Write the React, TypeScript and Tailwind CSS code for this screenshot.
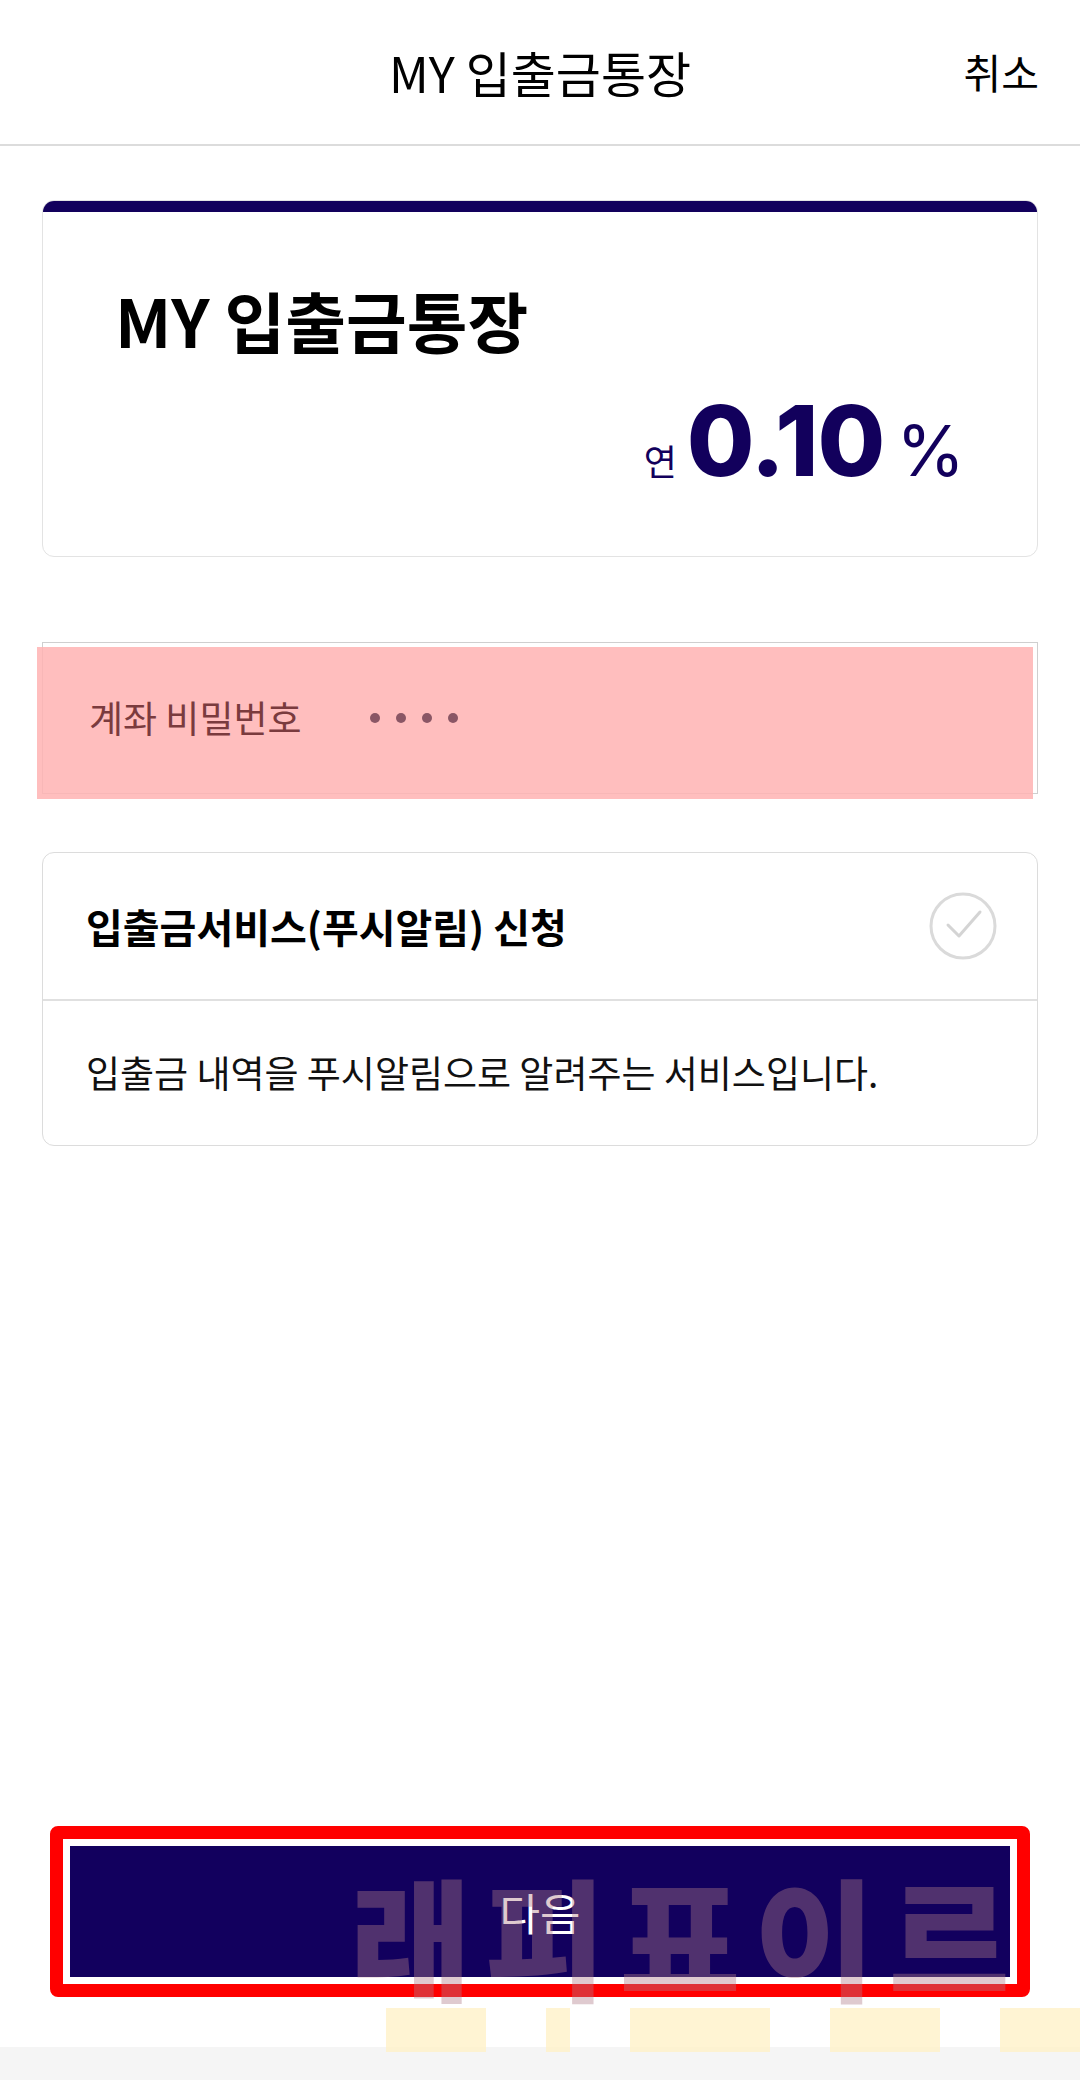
function CheckCircle() {
  return (
    <svg width="68" height="68" viewBox="0 0 68 68" fill="none">
      <circle cx="34" cy="34" r="32" stroke="#dadada" strokeWidth="3" />
      <path
        d="M19 33 L30 44 L51 20"
        stroke="#d4d4d4"
        strokeWidth="3"
        strokeLinecap="round"
        strokeLinejoin="round"
      />
    </svg>
  );
}

function Watermark() {
  return (
    <div className="pointer-events-none absolute left-[350px] top-[1868px] flex flex-col">
      <span className="text-[132px] font-black leading-none tracking-[0.1em] text-[#b07a86]/40">
        래피표이르
      </span>
      <div className="mt-[8px] flex gap-[60px] pl-[36px]">
        <div className="h-[44px] w-[100px] bg-[#fff1c8]/80" />
        <div className="h-[44px] w-[24px] bg-[#fff1c8]/80" />
        <div className="h-[44px] w-[140px] bg-[#fff1c8]/80" />
        <div className="h-[44px] w-[110px] bg-[#fff1c8]/80" />
        <div className="h-[44px] w-[140px] bg-[#fff1c8]/80" />
      </div>
    </div>
  );
}

export default function App() {
  return (
    <div
      className="relative flex h-[2080px] w-[1080px] flex-col overflow-hidden bg-white text-black"
      style={{ fontFamily: '"Noto Sans CJK KR", "Noto Sans", sans-serif' }}
    >
      {/* header */}
      <header className="grid h-[146px] shrink-0 grid-cols-[1fr_auto_1fr] items-center border-b-2 border-[#dcdcdc] px-[41px]">
        <div />
        <h1 className="text-[49px] font-normal">MY 입출금통장</h1>
        <button className="justify-self-end text-[41px]">취소</button>
      </header>

      <main className="flex flex-1 flex-col px-[42px] pt-[54px]">
        {/* product card */}
        <div className="flex h-[357px] flex-col overflow-hidden rounded-[12px] border border-[#e3e3e3]">
          <div className="h-[11px] bg-[#12005c]" />
          <div className="flex flex-1 flex-col px-[72px] pt-[74px]">
            <h2 className="text-[66px] font-bold leading-none">MY 입출금통장</h2>
            <div className="mt-[40px] flex items-baseline justify-end text-[#12005c]">
              <span className="mr-[10px] text-[36px]">연</span>
              <span
                className="text-[98px] font-extrabold leading-none tracking-[-0.01em]"
                style={{ fontFamily: "Inter, sans-serif" }}
              >
                0.10
              </span>
              <span
                className="ml-[12px] text-[70px] font-normal leading-none"
                style={{ fontFamily: "Inter, sans-serif" }}
              >
                %
              </span>
            </div>
          </div>
        </div>

        {/* password field */}
        <div className="relative mt-[85px] h-[152px] border border-[#cfcfcf]">
          <div className="absolute -left-[6px] right-[4px] top-[4px] -bottom-[6px] bg-[#ffb3b3]/85" />
          <div className="relative flex h-full items-center gap-[68px] pl-[46px]">
            <span className="text-[37px] text-[#7a3b3e]">계좌 비밀번호</span>
            <div className="flex gap-[16px]">
              <span className="h-[10px] w-[10px] rounded-full bg-[#8a5665]" />
              <span className="h-[10px] w-[10px] rounded-full bg-[#8a5665]" />
              <span className="h-[10px] w-[10px] rounded-full bg-[#8a5665]" />
              <span className="h-[10px] w-[10px] rounded-full bg-[#8a5665]" />
            </div>
          </div>
        </div>

        {/* push service card */}
        <div className="mt-[58px] flex flex-col rounded-[12px] border border-[#dcdcdc]">
          <div className="flex h-[148px] items-center justify-between border-b-2 border-[#e0e0e0] pl-[43px] pr-[40px]">
            <span className="text-[40px] font-bold">입출금서비스(푸시알림) 신청</span>
            <CheckCircle />
          </div>
          <div className="flex h-[144px] items-center pl-[43px]">
            <p className="text-[37px] text-[#111]">입출금 내역을 푸시알림으로 알려주는 서비스입니다.</p>
          </div>
        </div>

        <div className="flex-1" />

        {/* next button */}
        <div className="mx-[8px] mb-[50px] rounded-[8px] border-[13px] border-[#ff0000] p-[7px]">
          <button className="flex h-[131px] w-full items-center justify-center bg-[#12005e] text-[44px] text-white">
            다음
          </button>
        </div>
      </main>

      <div className="h-[33px] shrink-0 bg-[#f5f5f5]" />
      <Watermark />
    </div>
  );
}
